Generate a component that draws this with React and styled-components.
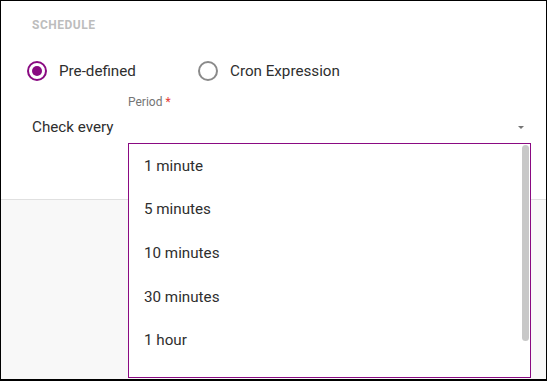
import React from 'react';
import styled, { createGlobalStyle } from 'styled-components';

const GlobalStyle = createGlobalStyle`
  html, body {
    margin: 0;
    padding: 0;
    background: #ffffff;
  }
  body {
    font-family: Roboto, 'Noto Sans', 'Liberation Sans', sans-serif;
  }
  * {
    box-sizing: border-box;
  }
`;

const PURPLE = '#8a0a82';
const TEXT = '#2e2e2e';

const periods = ['1 minute', '5 minutes', '10 minutes', '30 minutes', '1 hour'];

const Frame = styled.div`
  width: 547px;
  height: 381px;
  border: 1px solid #000;
  border-bottom-width: 2px;
  display: flex;
  flex-direction: column;
  overflow: hidden;
  background: #f8f8f8;
`;

const Panel = styled.section`
  height: 199px;
  flex-shrink: 0;
  background: #fff;
  border-bottom: 1px solid #e0e0e0;
  padding: 16px 15px 0 31px;
`;

const SectionTitle = styled.h3`
  margin: 0;
  font-size: 12px;
  line-height: 16px;
  font-weight: 700;
  letter-spacing: 0.5px;
  color: #bdbdbd;
  text-transform: uppercase;
`;

const RadioGroup = styled.div`
  display: flex;
  align-items: center;
  margin: 28px 0 0 -5px;
  height: 20px;
`;

const RadioOption = styled.label`
  display: flex;
  align-items: center;
  gap: 12px;
  width: ${(p) => p.width}px;
  font-size: 15.2px;
  line-height: 20px;
  color: ${TEXT};
  cursor: pointer;
`;

const RadioCircle = styled.span`
  width: 20px;
  height: 20px;
  border-radius: 50%;
  border: 2px solid ${(p) => (p.checked ? PURPLE : '#8a8a8a')};
  display: flex;
  align-items: center;
  justify-content: center;
  flex-shrink: 0;

  &::after {
    content: '';
    width: 10px;
    height: 10px;
    border-radius: 50%;
    background: ${PURPLE};
    display: ${(p) => (p.checked ? 'block' : 'none')};
  }
`;

const PeriodRow = styled.div`
  display: flex;
  align-items: flex-end;
  margin-top: 13px;
`;

const Prefix = styled.span`
  width: 96px;
  font-size: 15.2px;
  line-height: 26px;
  color: ${TEXT};
`;

const Field = styled.div`
  position: relative;
  flex: 1;
`;

const FieldLabel = styled.div`
  font-size: 12px;
  line-height: 16px;
  color: #757575;
  margin-bottom: 4px;

  span {
    color: #e53935;
  }
`;

const SelectBox = styled.div`
  height: 26px;
  display: flex;
  align-items: center;
  justify-content: flex-end;
  padding-right: 7px;
`;

const Caret = styled.span`
  width: 0;
  height: 0;
  border-left: 3px solid transparent;
  border-right: 3px solid transparent;
  border-top: 3px solid #757575;
  margin-top: 1px;
`;

const Menu = styled.div`
  position: absolute;
  top: calc(100% + 3px);
  left: 0;
  width: 403px;
  height: 235px;
  background: #fff;
  border: 1px solid ${PURPLE};
  overflow: hidden;
  z-index: 10;
`;

const MenuList = styled.ul`
  margin: 0;
  padding: 0;
  list-style: none;
`;

const ScrollThumb = styled.div`
  position: absolute;
  top: 1px;
  right: 1px;
  width: 7px;
  height: 196px;
  border-radius: 4px;
  background: #c8c8c8;
`;

const MenuItem = styled.li`
  height: 43.6px;
  display: flex;
  align-items: center;
  padding-left: 15px;
  font-size: 15.2px;
  line-height: 20px;
  color: ${TEXT};
  cursor: pointer;

  &:hover {
    background: #f5f5f5;
  }
`;

const Footer = styled.div`
  flex: 1;
  background: #f8f8f8;
`;

export default function App() {
  return (
    <>
      <GlobalStyle />
      <Frame>
        <Panel>
          <SectionTitle>Schedule</SectionTitle>
          <RadioGroup>
            <RadioOption width={171}>
              <RadioCircle checked />
              Pre-defined
            </RadioOption>
            <RadioOption width={200}>
              <RadioCircle />
              Cron Expression
            </RadioOption>
          </RadioGroup>
          <PeriodRow>
            <Prefix>Check every</Prefix>
            <Field>
              <FieldLabel>
                Period <span>*</span>
              </FieldLabel>
              <SelectBox>
                <Caret />
              </SelectBox>
              <Menu>
                <MenuList>
                  {periods.map((p) => (
                    <MenuItem key={p}>{p}</MenuItem>
                  ))}
                </MenuList>
                <ScrollThumb />
              </Menu>
            </Field>
          </PeriodRow>
        </Panel>
        <Footer />
      </Frame>
    </>
  );
}
